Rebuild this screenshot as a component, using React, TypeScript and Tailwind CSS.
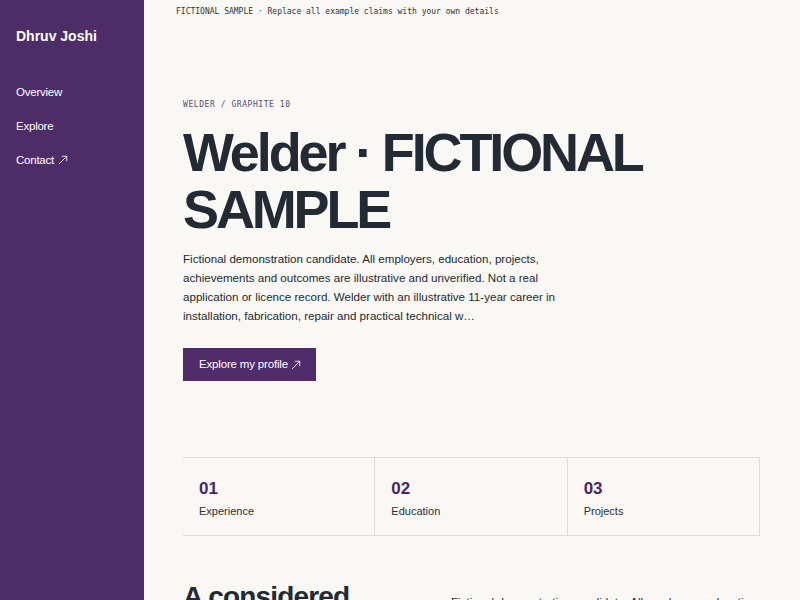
import React from "react";

const sans = { fontFamily: '"Liberation Sans", Arial, Helvetica, sans-serif' };
const mono = { fontFamily: '"DejaVu Sans Mono", "Liberation Mono", monospace' };

function Arrow({ className }: { className?: string }) {
  return (
    <svg viewBox="0 0 12 12" className={className} fill="none" stroke="currentColor" strokeWidth="1" strokeLinecap="round">
      <path d="M1.5 10.5 L10.5 1.5" />
      <path d="M5 1.5 H10.5 V7" />
    </svg>
  );
}

export default function App() {
  return (
    <div className="flex h-screen w-full overflow-hidden bg-[#f9f8f4] text-[#222a33]" style={sans}>
      <aside className="flex w-[144px] shrink-0 flex-col bg-[#4e2c68] px-4 text-white">
        <div className="pt-[27px] text-[14px] font-bold leading-[18px]">Dhruv Joshi</div>
        <nav className="mt-[40px] flex flex-col gap-[20px] text-[11.5px] leading-[14px] tracking-[-0.02em]">
          <a>Overview</a>
          <a>Explore</a>
          <a className="flex items-center gap-[4px]">
            Contact <Arrow className="h-[10px] w-[10px]" />
          </a>
        </nav>
      </aside>
      <main className="flex min-w-0 flex-1 flex-col">
        <div className="px-8 pt-[6px] text-[8px] leading-[12px] text-[#333]" style={mono}>
          FICTIONAL SAMPLE · Replace all example claims with your own details
        </div>
        <section className="pl-[39px] pr-[40px]">
          <div className="mt-[82px] text-[8px] leading-[10px] tracking-[0.07em] text-[#5b4a6b]" style={mono}>
            WELDER / GRAPHITE 10
          </div>
          <h1 className="mt-[14px] text-[54px] font-bold leading-[57px] tracking-[-0.058em] text-[#222a33]">
            Welder · FICTIONAL
            <br />
            SAMPLE
          </h1>
          <p className="mt-[11px] max-w-[380px] text-[11.6px] leading-[19px] text-[#23282f]">
            Fictional demonstration candidate. All employers, education, projects, achievements and outcomes are illustrative and unverified. Not a real application or licence record. Welder with an illustrative 11-year career in installation, fabrication, repair and practical technical w…
          </p>
          <div className="mt-[23px]">
            <button className="flex h-[33px] items-center gap-[3px] bg-[#512c6b] pl-4 pr-[15px] text-[11.5px] tracking-[-0.015em] text-white">
              Explore my profile <Arrow className="h-[10px] w-[10px]" />
            </button>
          </div>
          <div className="mt-[76px] grid grid-cols-3 border-y border-[#dedcd6]">
            {[
              ["01", "Experience"],
              ["02", "Education"],
              ["03", "Projects"],
            ].map(([n, l]) => (
              <div key={n} className="h-[77px] border-r border-[#dedcd6] px-4 pt-[21px]">
                <div className="text-[17px] font-bold leading-[20px] text-[#4a2664]">{n}</div>
                <div className="mt-[5px] text-[11px] leading-[14px] text-[#2a2f36]">{l}</div>
              </div>
            ))}
          </div>
          <div className="mt-[44px] grid grid-cols-[236px_1fr] gap-8">
            <h2 className="max-w-[200px] text-[28px] font-bold leading-[34px] tracking-[-0.03em]">A considered path</h2>
            <p className="mt-[12px] text-[11.6px] leading-[19px] text-[#23282f]">
              Fictional demonstration candidate. All employers, education, projects and outcomes are illustrative.
            </p>
          </div>
        </section>
      </main>
    </div>
  );
}
